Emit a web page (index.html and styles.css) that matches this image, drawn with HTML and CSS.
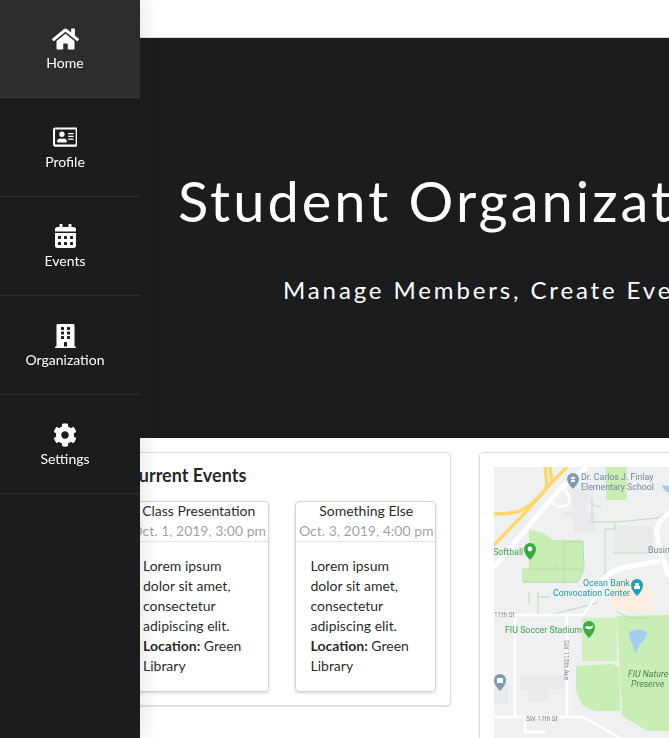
FILE: index.html
```html
<!DOCTYPE html>
<html lang="en">
<head>
    <meta charset="UTF-8">
    <meta name="viewport" content="width=device-width, initial-scale=1.0">
    <title>Student Organization Manager</title>
    <link rel="stylesheet" href="styles.css">
</head>
<body>
    <nav class="sidebar">
        <a class="side-item active" href="#">
            <svg class="side-icon" viewBox="0 0 576 512"><path d="M280.37 148.26L96 300.11V464a16 16 0 0 0 16 16l112.06-.29a16 16 0 0 0 15.92-16V368a16 16 0 0 1 16-16h64a16 16 0 0 1 16 16v95.64a16 16 0 0 0 16 16.05L464 480a16 16 0 0 0 16-16V300L295.67 148.26a12.19 12.19 0 0 0-15.3 0zM571.6 251.47L488 182.56V44.05a12 12 0 0 0-12-12h-56a12 12 0 0 0-12 12v72.61L318.47 43a48 48 0 0 0-61 0L4.34 251.47a12 12 0 0 0-1.6 16.9l25.5 31A12 12 0 0 0 45.15 301l235.22-193.74a12.19 12.19 0 0 1 15.3 0L530.9 301a12 12 0 0 0 16.9-1.6l25.5-31a12 12 0 0 0-1.7-16.93z"/></svg>
            <span>Home</span>
        </a>
        <a class="side-item" href="#">
            <svg class="side-icon icon-card" viewBox="0 0 576 512"><path d="M528 32H48C21.5 32 0 53.5 0 80v352c0 26.5 21.5 48 48 48h480c26.5 0 48-21.5 48-48V80c0-26.5-21.5-48-48-48zm0 400H48V80h480v352zM208 256c35.3 0 64-28.7 64-64s-28.7-64-64-64-64 28.7-64 64 28.7 64 64 64zm-89.6 128h179.2c12.4 0 22.4-8.6 22.4-19.2v-19.2c0-31.8-30.1-57.6-67.2-57.6-10.8 0-18.7 8-44.8 8-26.9 0-33.4-8-44.8-8-37.1 0-67.2 25.8-67.2 57.6v19.2c0 10.6 10 19.2 22.4 19.2zM360 320h112c4.4 0 8-3.6 8-8v-16c0-4.4-3.6-8-8-8H360c-4.4 0-8 3.6-8 8v16c0 4.4 3.6 8 8 8zm0-64h112c4.4 0 8-3.6 8-8v-16c0-4.4-3.6-8-8-8H360c-4.4 0-8 3.6-8 8v16c0 4.4 3.6 8 8 8zm0-64h112c4.4 0 8-3.6 8-8v-16c0-4.4-3.6-8-8-8H360c-4.4 0-8 3.6-8 8v16c0 4.4 3.6 8 8 8z"/></svg>
            <span>Profile</span>
        </a>
        <a class="side-item" href="#">
            <svg class="side-icon icon-cal" viewBox="0 0 448 512"><path d="M0 464c0 26.5 21.5 48 48 48h352c26.5 0 48-21.5 48-48V192H0v272zm320-196c0-6.6 5.4-12 12-12h40c6.6 0 12 5.4 12 12v40c0 6.6-5.4 12-12 12h-40c-6.6 0-12-5.4-12-12v-40zm0 128c0-6.6 5.4-12 12-12h40c6.6 0 12 5.4 12 12v40c0 6.6-5.4 12-12 12h-40c-6.6 0-12-5.4-12-12v-40zM192 268c0-6.6 5.4-12 12-12h40c6.6 0 12 5.4 12 12v40c0 6.6-5.4 12-12 12h-40c-6.6 0-12-5.4-12-12v-40zm0 128c0-6.6 5.4-12 12-12h40c6.6 0 12 5.4 12 12v40c0 6.6-5.4 12-12 12h-40c-6.6 0-12-5.4-12-12v-40zM64 268c0-6.6 5.4-12 12-12h40c6.6 0 12 5.4 12 12v40c0 6.6-5.4 12-12 12H76c-6.6 0-12-5.4-12-12v-40zm0 128c0-6.6 5.4-12 12-12h40c6.6 0 12 5.4 12 12v40c0 6.6-5.4 12-12 12H76c-6.6 0-12-5.4-12-12v-40zM400 64h-48V16c0-8.8-7.2-16-16-16h-32c-8.8 0-16 7.2-16 16v48H160V16c0-8.8-7.2-16-16-16h-32c-8.8 0-16 7.2-16 16v48H48C21.5 64 0 85.5 0 112v48h448v-48c0-26.5-21.5-48-48-48z"/></svg>
            <span>Events</span>
        </a>
        <a class="side-item" href="#">
            <svg class="side-icon" viewBox="0 0 448 512"><path d="M436 480h-20V24c0-13.255-10.745-24-24-24H56C42.745 0 32 10.745 32 24v456H12c-6.627 0-12 5.373-12 12v20h448v-20c0-6.627-5.373-12-12-12zM128 76c0-6.627 5.373-12 12-12h40c6.627 0 12 5.373 12 12v40c0 6.627-5.373 12-12 12h-40c-6.627 0-12-5.373-12-12V76zm0 96c0-6.627 5.373-12 12-12h40c6.627 0 12 5.373 12 12v40c0 6.627-5.373 12-12 12h-40c-6.627 0-12-5.373-12-12v-40zm52 148h-40c-6.627 0-12-5.373-12-12v-40c0-6.627 5.373-12 12-12h40c6.627 0 12 5.373 12 12v40c0 6.627-5.373 12-12 12zm76 160h-64v-84c0-6.627 5.373-12 12-12h40c6.627 0 12 5.373 12 12v84zm64-172c0 6.627-5.373 12-12 12h-40c-6.627 0-12-5.373-12-12v-40c0-6.627 5.373-12 12-12h40c6.627 0 12 5.373 12 12v40zm0-96c0 6.627-5.373 12-12 12h-40c-6.627 0-12-5.373-12-12v-40c0-6.627 5.373-12 12-12h40c6.627 0 12 5.373 12 12v40zm0-96c0 6.627-5.373 12-12 12h-40c-6.627 0-12-5.373-12-12V76c0-6.627 5.373-12 12-12h40c6.627 0 12 5.373 12 12v40z"/></svg>
            <span>Organization</span>
        </a>
        <a class="side-item" href="#">
            <svg class="side-icon" viewBox="0 0 512 512"><path d="M487.4 315.7l-42.6-24.6c4.3-23.2 4.3-47 0-70.2l42.6-24.6c4.9-2.8 7.1-8.6 5.5-14-11.1-35.6-30-67.8-54.7-94.6-3.8-4.1-10-5.1-14.8-2.3L380.8 110c-17.9-15.4-38.5-27.3-60.8-35.1V25.8c0-5.6-3.9-10.5-9.4-11.7-36.7-8.2-74.3-7.8-109.2 0-5.5 1.2-9.4 6.1-9.4 11.7V75c-22.2 7.9-42.8 19.8-60.8 35.1L88.7 85.5c-4.9-2.8-11-1.9-14.8 2.3-24.7 26.7-43.6 58.9-54.7 94.6-1.7 5.4.6 11.2 5.5 14L67.3 221c-4.3 23.2-4.3 47 0 70.2l-42.6 24.6c-4.9 2.8-7.1 8.6-5.5 14 11.1 35.6 30 67.8 54.7 94.6 3.8 4.1 10 5.1 14.8 2.3l42.6-24.6c17.9 15.4 38.5 27.3 60.8 35.1v49.2c0 5.6 3.9 10.5 9.4 11.7 36.7 8.2 74.3 7.8 109.2 0 5.5-1.2 9.4-6.1 9.4-11.7v-49.2c22.2-7.9 42.8-19.8 60.8-35.1l42.6 24.6c4.9 2.8 11 1.9 14.8-2.3 24.7-26.7 43.6-58.9 54.7-94.6 1.5-5.5-.7-11.3-5.6-14.1zM256 336c-44.1 0-80-35.9-80-80s35.9-80 80-80 80 35.9 80 80-35.9 80-80 80z"/></svg>
            <span>Settings</span>
        </a>
    </nav>

    <div class="page">
        <div class="topbar"></div>

        <header class="hero">
            <h1>Student Organization Manager</h1>
            <p>Manage Members, Create Events, Stay Organized</p>
        </header>

        <main class="panels">
            <section class="panel events-panel">
                <h3>Current Events</h3>
                <div class="event-list">
                    <article class="event-card">
                        <div class="event-head">
                            <div class="event-name">Class Presentation</div>
                            <div class="event-date">Oct. 1, 2019, 3:00 pm</div>
                        </div>
                        <div class="event-body">
                            Lorem ipsum dolor sit amet, consectetur adipiscing elit.
                            <b>Location:</b> Green Library
                        </div>
                    </article>
                    <article class="event-card">
                        <div class="event-head">
                            <div class="event-name">Something Else</div>
                            <div class="event-date">Oct. 3, 2019, 4:00 pm</div>
                        </div>
                        <div class="event-body">
                            Lorem ipsum dolor sit amet, consectetur adipiscing elit.
                            <b>Location:</b> Green Library
                        </div>
                    </article>
                </div>
            </section>

            <section class="panel map-panel">
                <!-- map drawn in page coordinates, same numbers as the screenshot -->
                <svg class="map" viewBox="494 467 175 271" width="175" height="271">
                    <rect x="494" y="467" width="175" height="271" fill="#eff0f2"/>

                    <!-- parks -->
                    <path class="park" d="M606 467h21v33h-21z"/>
                    <path class="park" d="M529 530q14 1 24 10h30v30l-6 13h-54v-13h6z"/>
                    <path class="park-light" d="M582 618h35v43h-35z"/>
                    <path class="park" d="M617 616l52-1v116h-22l-25-15-2-48-7-4-37 2v25l6 14 13 6h25v-30z"/>

                    <!-- campus -->
                    <path fill="#fbeee0" d="M610 586l14-8 24 4 6 14-3 15h-41z"/>
                    <path fill="#e9eaec" d="M571 489h22v15h-6v8h9v20h-22l-1-14h-10v-6h11z"/>
                    <path fill="#e9eaec" d="M614 526h39v26h-39z"/>
                    <path fill="#e9eaec" d="M520 675h44v14h-16v13h-20v-12h-8z"/>
                    <path fill="#e9eaec" d="M494 682h14v22h-14z"/>

                    <!-- paths -->
                    <g class="walk">
                        <path d="M592 522h24l42-4 8-6M593 505l8 2M592 523v-25M615 523v6h-10v50M613 553h35M564 542h19l1 27-6 13h-55v-13h60M564 542v40M555 570v-6"/>
                        <path d="M529 592v12M538 592v24M538 597h12M551 615l46-12M617 612l12 6h20"/>
                    </g>

                    <!-- streets -->
                    <g class="road">
                        <path d="M494 567l66-78 27-22"/>
                        <path d="M669 513q-13 8-12 22 2 16 8 30l4 12"/>
                        <path d="M596 590q10-18 26-22l38-7"/>
                    </g>
                    <g class="road thin">
                        <path d="M494 615h89l14-20"/>
                        <path d="M515 615v102M567 615v102"/>
                        <path d="M494 717h89l37 21"/>
                        <path d="M525 718v14h20"/>
                        <path d="M561 487q10 6 8 16-1 4-12 3l-7-5"/>
                    </g>
                    <g class="highway">
                        <path d="M494 514q16 0 26-3 22-12 27-26l-2-18"/>
                        <path d="M494 545l29-30 29-33 15-15"/>
                        <path d="M552 482l-2-15"/>
                    </g>

                    <!-- water -->
                    <path fill="#a5cdf2" d="M662 485l7 1v7q-6-2-7-8z"/>
                    <path fill="#a5cdf2" d="M629 632q10-5 18 0-1 8-7 12l-4 9q-3-2-3-8-4-6-4-13z"/>

                    <!-- pins -->
                    <path fill="#7d9bb2" d="M573 473a6 6 0 0 1 6 6q0 4-6 10-6-6-6-10a6 6 0 0 1 6-6z"/>
                    <path fill="#fff" d="M570 478l3-1.5 3 1.5-3 1.5zM571 480h4v2h-4z"/>
                    <path fill="#3bab3f" d="M530 543a6 6 0 0 1 6 6q0 5-6 11-6-6-6-11a6 6 0 0 1 6-6z"/>
                    <circle cx="530" cy="549" r="2.4" fill="#fff"/>
                    <path fill="#17a2b8" d="M637 579a6 6 0 0 1 6 6q0 5-6 11-6-6-6-11a6 6 0 0 1 6-6z"/>
                    <path fill="#fff" d="M634 586h6v3h-6zM635 583h4v3h-4z"/>
                    <path fill="#3bab3f" d="M589 621a6 6 0 0 1 6 6q0 5-6 11-6-6-6-11a6 6 0 0 1 6-6z"/>
                    <path fill="#fff" d="M585 627q4-2 5 0l3-2q0 4-3 4-4 1-5-2z"/>
                    <path fill="#7d9bb2" d="M500 674a6 6 0 0 1 6 6q0 5-6 11-6-6-6-11a6 6 0 0 1 6-6z"/>
                    <path fill="#fff" d="M497 678h6v5h-6z"/>

                    <!-- labels -->
                    <text class="lbl poi" x="581" y="480">Dr. Carlos J. Finlay</text>
                    <text class="lbl poi" x="581" y="490">Elementary School</text>
                    <text class="lbl poi" x="648" y="553">Busin</text>
                    <text class="lbl park-lbl" x="493" y="555">Softball</text>
                    <text class="lbl teal" x="583" y="586">Ocean Bank</text>
                    <text class="lbl teal" x="553" y="596">Convocation Center</text>
                    <text class="lbl park-lbl" x="505" y="633">FIU Soccer Stadium</text>
                    <text class="lbl nature" x="628" y="677">FIU Nature</text>
                    <text class="lbl nature" x="631" y="687">Preserve</text>
                    <text class="lbl street" x="494" y="617">11th St</text>
                    <text class="lbl street" x="526" y="721">SW 17th St</text>
                    <text class="lbl street" transform="translate(564 640) rotate(90)">SW 115th Ave</text>
                </svg>
            </section>
        </main>
    </div>
</body>
</html>
```

FILE: styles.css
```css
html, body {
    margin: 0;
    padding: 0;
    height: 100%;
    overflow: hidden;
}

body {
    font-family: "Lato", "Liberation Sans", sans-serif;
    font-size: 14px;
    line-height: 20px;
    color: rgba(0, 0, 0, 0.87);
    background-color: #fff;
}

/* sidebar sits over the page */
.sidebar {
    position: fixed;
    top: 0;
    left: 0;
    bottom: 0;
    width: 130px;
    padding-right: 10px;
    background-color: #1b1c1d;
    box-shadow: 0 0 20px rgba(34, 36, 38, 0.15);
    z-index: 10;
}

.side-item {
    display: flex;
    flex-direction: column;
    align-items: center;
    gap: 2px;
    height: 70px;
    margin-right: -10px;
    padding: 28px 10px 0 0;
    border-bottom: 1px solid rgba(255, 255, 255, 0.08);
    color: #fff;
    text-decoration: none;
}

.side-item.active {
    padding-top: 27px;
    background-color: rgba(255, 255, 255, 0.08);
}

.side-icon {
    display: block;
    height: 24px;
    fill: #fff;
}

.icon-card {
    height: 22px;
    margin-bottom: 2px;
}

.icon-cal {
    margin: -1px 0 1px;
}

.page {
    width: 1200px;
}

.topbar {
    height: 37px;
    border-bottom: 1px solid #ddd;
    background-color: #fff;
}

.hero {
    height: 400px;
    box-sizing: border-box;
    padding-top: 129px;
    background-color: #1b1c1d;
    color: #fff;
    white-space: nowrap;
}

.hero h1 {
    margin: 0 0 0 178px;
    font-size: 56px;
    line-height: 68px;
    font-weight: 400;
    letter-spacing: 3px;
}

.hero p {
    margin: 40px 0 0 283px;
    font-size: 24px;
    line-height: 30px;
    letter-spacing: 2.88px;
}

.panels {
    display: flex;
    gap: 28px;
    padding: 14px 0 0 112px;
}

.panel {
    box-sizing: border-box;
    padding: 14px;
    border: 1px solid #ddd;
    border-radius: 4px;
    box-shadow: 0 1px 2px rgba(34, 36, 38, 0.15);
    background-color: #fff;
}

.events-panel {
    width: 339px;
    height: 254px;
    padding-top: 12px;
}

.events-panel h3 {
    margin: 0 0 16px;
    font-size: 18px;
    line-height: 20px;
    font-weight: 700;
}

.event-list {
    display: flex;
    gap: 26px;
}

.event-card {
    width: 143px;
    height: 191px;
    box-sizing: border-box;
    border: 1px solid #d4d4d5;
    border-radius: 4px;
    box-shadow: 0 1px 3px #d4d4d5;
}

.event-head {
    height: 40px;
    padding-left: 2px;
    border-bottom: 1px solid #e4e4e5;
    text-align: center;
    white-space: nowrap;
}

.event-name {
    margin-top: -1px;
}

.event-date {
    color: rgba(0, 0, 0, 0.4);
}

.event-body {
    padding: 14px 16px 14px 15px;
}

.map-panel {
    width: 500px;
    height: 400px;
}

.map {
    display: block;
    filter: blur(0.45px);
}

.park { fill: #c8eeb5; }
.park-light { fill: #cff0bd; }

.walk path {
    fill: none;
    stroke: #b5dcb0;
    stroke-width: 1;
}

.road path {
    fill: none;
    stroke: #fff;
    stroke-width: 5;
}

.road.thin path {
    stroke-width: 2.5;
}

.highway path {
    fill: none;
    stroke: #fdd76a;
    stroke-width: 3.5;
}

.lbl {
    font-family: "Roboto", "Liberation Sans", sans-serif;
    font-size: 8.8px;
}

.poi { fill: #71899c; }
.park-lbl { fill: #3f9f4a; }
.teal { fill: #1e9aa8; }
.nature { fill: #4f7f55; font-style: italic; }
.street { fill: #7f8790; font-size: 6.5px; }
```
